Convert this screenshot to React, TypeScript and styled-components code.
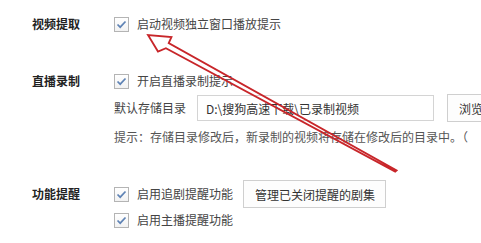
import React from "react";
import styled, { createGlobalStyle } from "styled-components";

const Global = createGlobalStyle`
  html, body { margin: 0; padding: 0; background: #ffffff; overflow: hidden; }
  body { width: 481px; height: 243px; font-family: "Noto Sans CJK SC", "Noto Sans", sans-serif; font-size: 12px; color: #444; }
  #root { position: relative; width: 481px; height: 243px; overflow: hidden; }
`;

const Page = styled.div`
  display: flex;
  flex-direction: column;
  padding-top: 16px;
  width: 600px;
`;

const Section = styled.div<{ $mt: number }>`
  display: grid;
  grid-template-columns: 82px 1fr;
  margin-top: ${(p) => p.$mt}px;
  padding-left: 32px;
`;

const Label = styled.div<{ $pt: number }>`
  font-weight: 700;
  color: #222;
  font-size: 12px;
  line-height: 16px;
  padding-top: ${(p) => p.$pt}px;
  white-space: nowrap;
`;

const Content = styled.div`
  display: flex;
  flex-direction: column;
`;

const Row = styled.div<{ $h: number; $mt?: number }>`
  display: flex;
  align-items: center;
  height: ${(p) => p.$h}px;
  margin-top: ${(p) => p.$mt ?? 0}px;
  white-space: nowrap;
`;

const Box = styled.span`
  width: 13px;
  height: 13px;
  border: 1px solid #b4b4b4;
  background: linear-gradient(#ffffff, #f2f2f2);
  display: inline-flex;
  align-items: center;
  justify-content: center;
  margin-right: 8px;
  flex: none;
`;

const Text = styled.span<{ $c?: string }>`
  color: ${(p) => p.$c ?? "#444"};
  line-height: 16px;
`;

const Input = styled.div`
  width: 227px;
  height: 24px;
  border: 1px solid #d4d4d4;
  margin-left: 11px;
  padding-left: 8px;
  display: flex;
  align-items: center;
  color: #333;
  flex: none;
`;

const Btn = styled.div<{ $w: number; $h: number; $ml: number }>`
  width: ${(p) => p.$w}px;
  height: ${(p) => p.$h}px;
  border: 1px solid #cfcfcf;
  background: #fdfdfd;
  margin-left: ${(p) => p.$ml}px;
  display: flex;
  align-items: center;
  padding-left: 11px;
  box-sizing: border-box;
  color: #333;
  flex: none;
`;

const Arrow = styled.svg`
  position: absolute;
  left: 0;
  top: 0;
  pointer-events: none;
`;

const Check = () => (
  <Box>
    <svg width="11" height="9" viewBox="0 0 11 9">
      <path d="M1.5 4.5 L4.2 7.2 L9.5 1.5" fill="none" stroke="#5f83b5" strokeWidth="1.7" />
    </svg>
  </Box>
);

export default function App() {
  return (
    <>
      <Global />
      <Page>
        <Section $mt={0}>
          <Label $pt={0}>视频提取</Label>
          <Content>
            <Row $h={16}>
              <Check />
              <Text>启动视频独立窗口播放提示</Text>
            </Row>
          </Content>
        </Section>
        <Section $mt={41}>
          <Label $pt={0}>直播录制</Label>
          <Content>
            <Row $h={16}>
              <Check />
              <Text>开启直播录制提示</Text>
            </Row>
            <Row $h={28} $mt={5}>
              <Text>默认存储目录</Text>
              <Input>D:\搜狗高速下载\已录制视频</Input>
              <Btn $w={60} $h={28} $ml={13}>浏览</Btn>
            </Row>
            <Row $h={16} $mt={7}>
              <Text $c="#555">提示：存储目录修改后，新录制的视频将存储在修改后的目录中。（</Text>
            </Row>
          </Content>
        </Section>
        <Section $mt={35}>
          <Label $pt={6}>功能提醒</Label>
          <Content>
            <Row $h={28}>
              <Check />
              <Text>启用追剧提醒功能</Text>
              <Btn $w={143} $h={28} $ml={10}>管理已关闭提醒的剧集</Btn>
            </Row>
            <Row $h={16} $mt={4}>
              <Check />
              <Text>启用主播提醒功能</Text>
            </Row>
          </Content>
        </Section>
      </Page>
      <Arrow width="481" height="243" viewBox="0 0 481 243">
        <polygon
          points="148,35 158,51.5 165.9,48.2 395.2,171.6 396.6,170.4 168.7,43 171.5,37"
          fill="none"
          stroke="#c8262a"
          strokeWidth="1.8"
          strokeLinejoin="miter"
        />
      </Arrow>
    </>
  );
}
